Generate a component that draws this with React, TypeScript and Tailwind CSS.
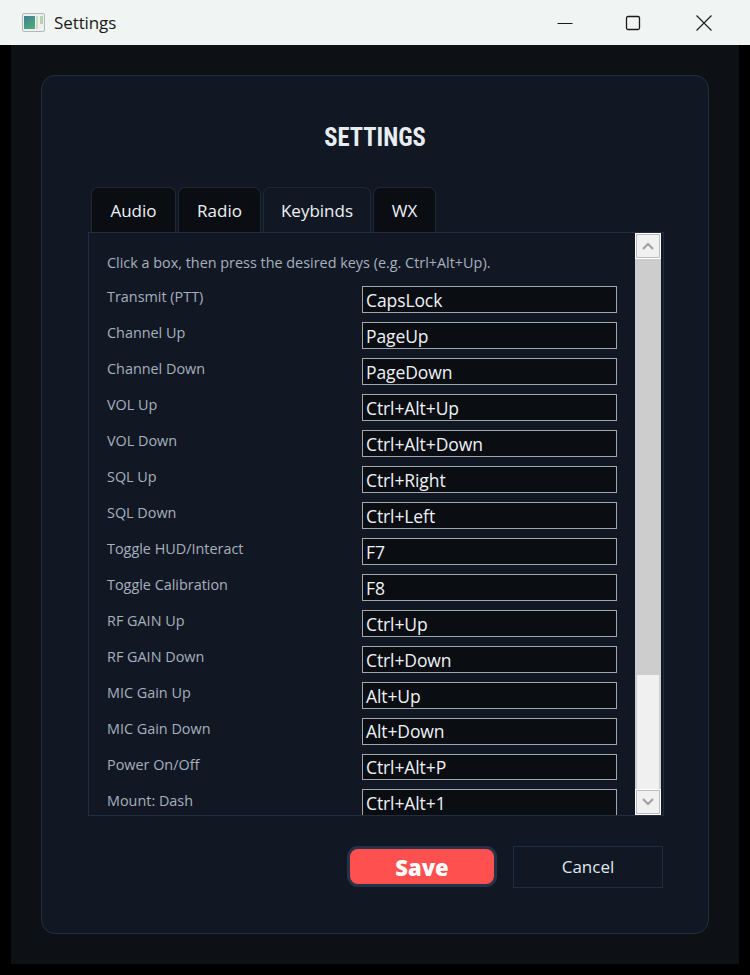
const rows: [string, string][] = [
  ["Transmit (PTT)", "CapsLock"],
  ["Channel Up", "PageUp"],
  ["Channel Down", "PageDown"],
  ["VOL Up", "Ctrl+Alt+Up"],
  ["VOL Down", "Ctrl+Alt+Down"],
  ["SQL Up", "Ctrl+Right"],
  ["SQL Down", "Ctrl+Left"],
  ["Toggle HUD/Interact", "F7"],
  ["Toggle Calibration", "F8"],
  ["RF GAIN Up", "Ctrl+Up"],
  ["RF GAIN Down", "Ctrl+Down"],
  ["MIC Gain Up", "Alt+Up"],
  ["MIC Gain Down", "Alt+Down"],
  ["Power On/Off", "Ctrl+Alt+P"],
  ["Mount: Dash", "Ctrl+Alt+1"],
];

const tabs = [
  { name: "Audio", w: "w-[85px]", active: false },
  { name: "Radio", w: "w-[83px]", active: false },
  { name: "Keybinds", w: "w-[108px]", active: true },
  { name: "WX", w: "w-[63px]", active: false },
];

export default function App() {
  return (
    <div className="w-[750px] h-[975px] bg-black flex flex-col overflow-hidden font-['Open_Sans','Noto_Sans',sans-serif]">
      <div className="h-[45px] shrink-0 bg-[#f0f4f2] flex items-center text-[#1a1a1a]">
        <svg width="24" height="20" viewBox="0 0 24 20" className="ml-[22px] shrink-0">
          <rect x="0.5" y="0.5" width="22" height="18" rx="1.5" fill="#eef0f0" stroke="#b4b8bc" />
          <defs>
            <linearGradient id="ic" x1="0" y1="0" x2="0.6" y2="1">
              <stop offset="0" stopColor="#3f7f9a" />
              <stop offset="1" stopColor="#4fa878" />
            </linearGradient>
          </defs>
          <rect x="2" y="3" width="11" height="13" fill="url(#ic)" />
          <rect x="14" y="3" width="2" height="13" fill="#c8dcc8" />
          <rect x="18" y="3" width="3" height="8" fill="#b4d4b0" />
        </svg>
        <span className="ml-[8px] text-[17px] tracking-[-0.1px]">Settings</span>
        <div className="ml-auto flex items-center">
          <svg width="16" height="16" viewBox="0 0 16 16" className="mr-[52px]">
            <path d="M0.5 8.5H15.5" stroke="#1a1a1a" strokeWidth="1" />
          </svg>
          <svg width="16" height="16" viewBox="0 0 16 16" className="mr-[54px]">
            <rect x="1.5" y="1.5" width="13" height="13" rx="1.5" fill="none" stroke="#1a1a1a" strokeWidth="1.3" />
          </svg>
          <svg width="18" height="18" viewBox="0 0 18 18" className="mr-[37px]">
            <path d="M1.5 1.5L16.5 16.5M16.5 1.5L1.5 16.5" stroke="#1a1a1a" strokeWidth="1.1" />
          </svg>
        </div>
      </div>
      <div className="mx-[11px] h-[919px] bg-[#0d1014] pt-[30px] px-[30px]">
        <div className="w-[668px] h-[859px] bg-[#121823] border border-[#222e40] rounded-[14px] flex flex-col pt-[48px]">
          <h1 className="h-[28px] text-center text-[25px] leading-[28px] font-bold text-[#e8edf2] font-['Roboto',sans-serif] [font-stretch:condensed] scale-x-[0.98]">
            SETTINGS
          </h1>
          <div className="flex gap-[2px] ml-[49px] mt-[35px] h-[45px]">
            {tabs.map((t) => (
              <div
                key={t.name}
                className={`${t.w} h-[45px] border border-b-0 border-[#1d2838] rounded-t-[7px] flex items-center justify-center pt-[1px] text-[17px] text-[#eef2f6] ${
                  t.active ? "bg-[#121823]" : "bg-[#0a0d12]"
                }`}
              >
                {t.name}
              </div>
            ))}
          </div>
          <div className="ml-[46px] w-[576px] h-[584px] border border-[#222e40] flex">
            <div className="flex-1 overflow-hidden pl-[18px] pr-[18px]">
              <p className="mt-[20px] h-[20px] text-[14.4px] leading-[20px] text-[#a6b0bf] whitespace-nowrap">
                Click a box, then press the desired keys (e.g. Ctrl+Alt+Up).
              </p>
              <div className="mt-[13px] flex flex-col gap-[9px]">
                {rows.map(([label, key], i) => (
                  <div key={label} className={`flex shrink-0 ${i === 13 ? "h-[26px]" : "h-[27px]"}`}>
                    <span className={`w-[255px] shrink-0 text-[14.4px] leading-[20px] text-[#a6b0bf] ${i === 14 ? "mt-[2px]" : "mt-[1px]"}`}>{label}</span>
                    <div
                      className={`w-[255px] shrink-0 border border-[#a3a7ad] bg-[#0a0d12] pl-[3px] pt-[1px] text-[17.5px] text-[#eef2f6] tracking-[-0.1px] ${
                        i === 13 ? "h-[26px]" : "h-[27px]"
                      } ${i === 12 || i === 13 ? "leading-[23px]" : "leading-[25px]"}`}
                    >
                      {key}
                    </div>
                  </div>
                ))}
              </div>
            </div>
            <div className="w-[26px] shrink-0 flex flex-col bg-[#cdcdcd] mr-[2px]">
              <div className="h-[26px] shrink-0 bg-[#f0f0f0] border-[1px] border-white flex">
                <div className="flex-1 border border-[#bdbdbd] flex items-center justify-center">
                  <svg width="12" height="8" viewBox="0 0 12 8">
                    <path d="M1 7L6 2L11 7" fill="none" stroke="#a0a0a0" strokeWidth="2" />
                  </svg>
                </div>
              </div>
              <div className="h-[416px] shrink-0" />
              <div className="flex-1 bg-[#f0f0f0] border-x-2 border-x-[#cfcfcf]" />
              <div className="h-[26px] shrink-0 bg-[#f0f0f0] border-[1px] border-white flex">
                <div className="flex-1 border border-[#bdbdbd] flex items-center justify-center">
                  <svg width="12" height="8" viewBox="0 0 12 8">
                    <path d="M1 1L6 6L11 1" fill="none" stroke="#a0a0a0" strokeWidth="2" />
                  </svg>
                </div>
              </div>
            </div>
          </div>
          <div className="flex ml-[305px] mt-[30px] gap-[16px]">
            <button className="w-[150px] h-[41px] rounded-[11px] bg-[#ff5050] border-[3px] border-[#25324a] text-white text-[22px] font-extrabold leading-[32px]">
              Save
            </button>
            <button className="w-[150px] h-[42px] border border-[#1f2d40] text-[#dfe9f2] text-[17px]">
              Cancel
            </button>
          </div>
        </div>
      </div>
    </div>
  );
}
